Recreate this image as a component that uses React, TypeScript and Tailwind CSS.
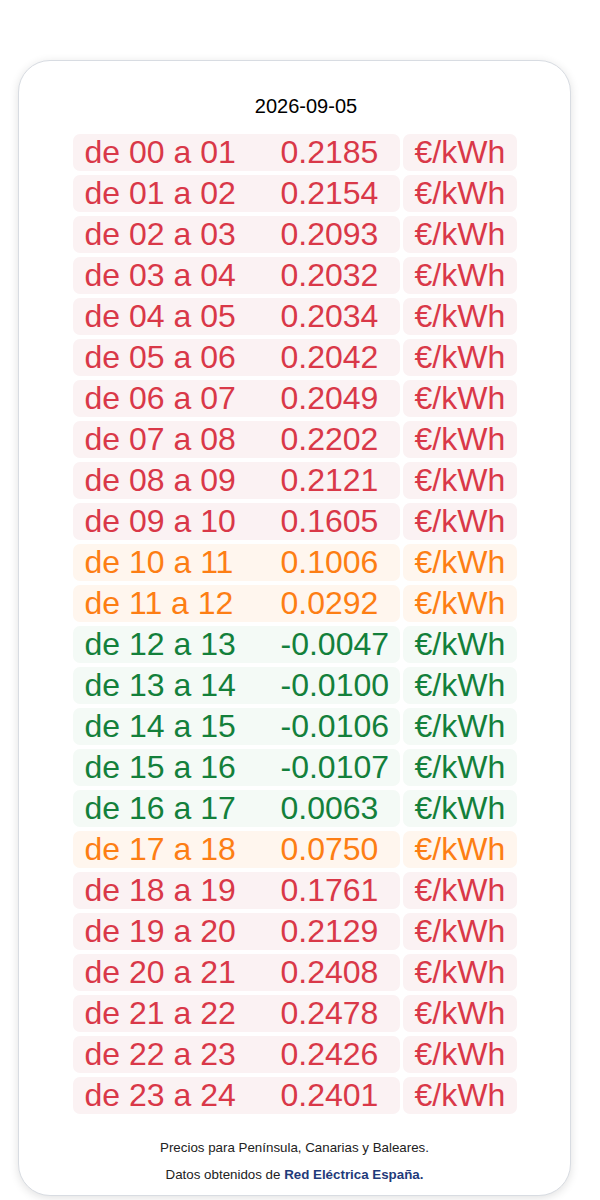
const prices: number[] = [
  0.2185, 0.2154, 0.2093, 0.2032, 0.2034, 0.2042, 0.2049, 0.2202, 0.2121, 0.1605,
  0.1006, 0.0292, -0.0047, -0.01, -0.0106, -0.0107, 0.0063, 0.075, 0.1761, 0.2129,
  0.2408, 0.2478, 0.2426, 0.2401,
]

const pad = (n: number) => n.toString().padStart(2, "0")

const tone = (p: number) => {
  if (p < 0.01) return { text: "text-[#13803b]", bg: "bg-[#f4faf6]" }
  if (p < 0.1 || (p > 0.1 && p < 0.11)) return { text: "text-[#fd7e14]", bg: "bg-[#fff6ee]" }
  return { text: "text-[#d93848]", bg: "bg-[#fbf2f3]" }
}

export default function App() {
  return (
    <div className="min-h-[1230px] bg-white pt-[60px]" style={{ fontFamily: '"Liberation Sans", Arial, sans-serif' }}>
      <div className="ml-[18px] w-[553px] rounded-[32px] border border-[#d8dce2] bg-white shadow-[0_2px_10px_rgba(0,0,0,0.12)] pb-[12px]">
        <h2 className="pt-[33px] pl-[23px] text-center text-[20px] leading-[24px] text-black">2026-09-05</h2>
        <div className="mt-[16px] flex flex-col items-center gap-[4px]">
          {prices.map((p, i) => {
            const t = tone(p)
            return (
              <div key={i} className={`flex gap-[3px] text-[32px] leading-[37px] ${t.text}`}>
                <div className={`flex w-[327px] rounded-[7px] ${t.bg}`}>
                  <span className="w-[208px] pl-[12px]">de {pad(i)} a {pad(i + 1)}</span>
                  <span>{p.toFixed(4)}</span>
                </div>
                <div className={`w-[114px] rounded-[7px] pl-[12px] ${t.bg}`}>€/kWh</div>
              </div>
            )
          })}
        </div>
        <div className="mt-[26px] text-center text-[13.33px] leading-[16px] text-[#222]">
          <p>Precios para Península, Canarias y Baleares.</p>
          <p className="mt-[11px]">
            Datos obtenidos de <a href="#" className="font-bold text-[#1f3a7a]">Red Eléctrica España.</a>
          </p>
        </div>
      </div>
    </div>
  )
}
